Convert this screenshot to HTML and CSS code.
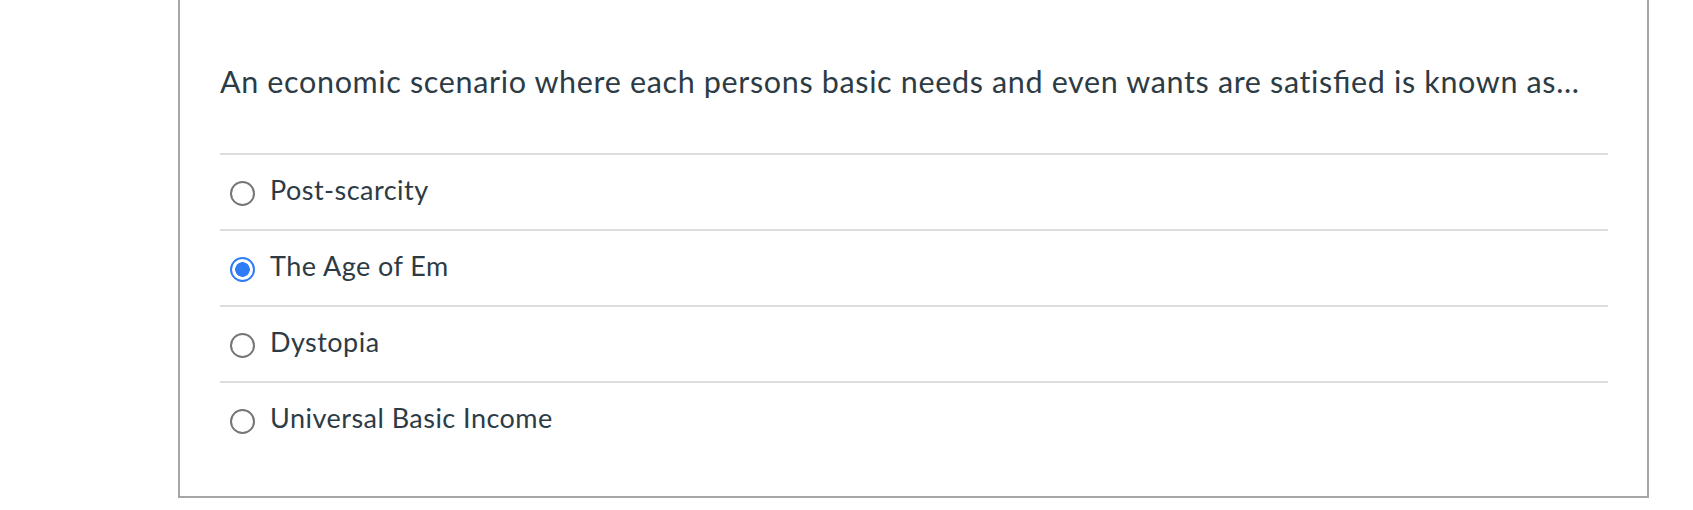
FILE: index.html
```html
<!DOCTYPE html>
<html lang="en">
<head>
<meta charset="utf-8">
<title>Question</title>
<link rel="stylesheet" href="styles.css">
</head>
<body>
<div class="page">
  <div class="card">
    <p class="question">An economic scenario where each persons basic needs and even wants are satis<span class="lig">fi</span>ed is known as...</p>
    <div class="answers">
      <label class="answer"><span class="radio"></span><span class="text">Post-scarcity</span></label>
      <label class="answer"><span class="radio checked"></span><span class="text">The Age of Em</span></label>
      <label class="answer"><span class="radio"></span><span class="text">Dystopia</span></label>
      <label class="answer"><span class="radio"></span><span class="text">Universal Basic Income</span></label>
    </div>
  </div>
</div>
</body>
</html>
```
FILE: styles.css
```css
html, body {
  margin: 0;
  padding: 0;
  background: #ffffff;
}
body {
  font-family: Lato, "Open Sans", sans-serif;
  color: #2d3b45;
}
.page {
  padding-left: 178px;
  width: 1471px;
}
.card {
  border: 2px solid #a6a6a6;
  border-top: none;
  padding: 59px 39px 39px 40px;
  box-sizing: border-box;
  width: 1471px;
}
.question {
  margin: 0 0 49px 0;
  font-size: 30.5px;
  letter-spacing: 0.65px;
  line-height: 45px;
}
.lig {
  letter-spacing: 0;
  margin-right: 0.65px;
}
.answers {
  display: flex;
  flex-direction: column;
}
.answer {
  display: flex;
  align-items: flex-start;
  border-top: 2px solid #dddddd;
  padding: 15px 0 19px 10px;
  font-size: 27px;
  letter-spacing: 0.47px;
  line-height: 40px;
}
.radio {
  width: 25px;
  height: 25px;
  box-sizing: border-box;
  border: 2px solid #767676;
  border-radius: 50%;
  margin-top: 11px;
  margin-right: 15px;
  flex: none;
  background: #fff;
}
.radio.checked {
  border: 2.5px solid #2f7cf6;
  background: radial-gradient(circle, #2f7cf6 0 7px, #ffffff 7.6px);
}
```
